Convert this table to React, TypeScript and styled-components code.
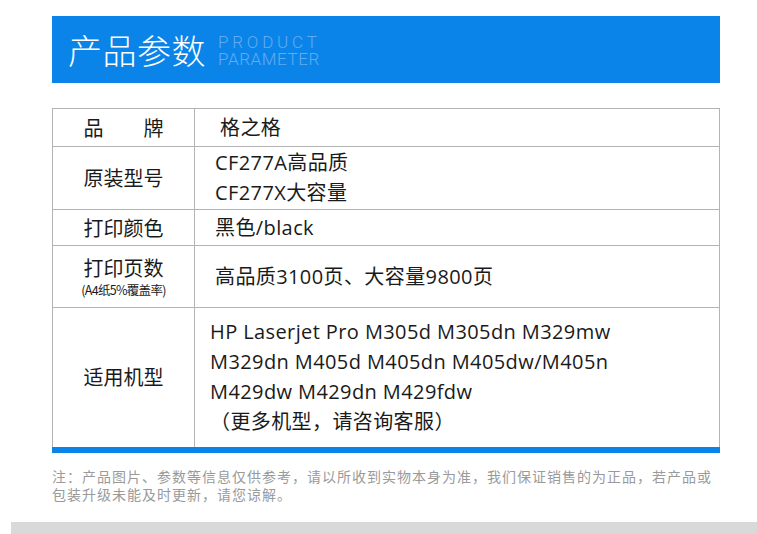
import { createGlobalStyle } from "styled-components";
import styled from "styled-components";
import { JSX } from "react";

const GlobalStyle = createGlobalStyle`
  html, body {
    margin: 0;
    padding: 0;
    background: #ffffff;
  }
  body {
    font-family: "Open Sans", "Noto Sans CJK SC", sans-serif;
    color: #1a1a1a;
  }
`;

const Page = styled.div`
  width: 757px;
  height: 534px;
  overflow: hidden;
  display: flex;
  flex-direction: column;
`;

const Content = styled.div`
  padding: 16px 37px 0 52px;
  display: flex;
  flex-direction: column;
`;

const Banner = styled.header`
  height: 67px;
  background-color: #0a84e8;
  display: flex;
  align-items: center;
  gap: 12px;
  padding-left: 16px;
`;

const BannerTitle = styled.h1`
  margin: 0;
  font-family: "Noto Sans CJK SC", sans-serif;
  font-weight: 300;
  font-size: 34px;
  line-height: 1;
  color: #ffffff;
  letter-spacing: 0.5px;
`;

const BannerSub = styled.div`
  display: flex;
  flex-direction: column;
  padding-top: 2px;
`;

const SubLine = styled.span<{ $spacing: number }>`
  font-family: "Roboto", "Liberation Sans", sans-serif;
  font-weight: 300;
  font-size: 17px;
  line-height: 17px;
  color: #62acf0;
  letter-spacing: ${({ $spacing }) => $spacing}px;
  white-space: nowrap;
`;

const Table = styled.table`
  margin-top: 25px;
  width: 668px;
  border-collapse: collapse;
  border-bottom: 6px solid #0a84e8;
`;

const Row = styled.tr<{ $height: number }>`
  height: ${({ $height }) => $height}px;
`;

const Label = styled.td`
  width: 141px;
  border: 1px solid #b3b3b3;
  text-align: center;
  vertical-align: middle;
  font-family: "Noto Sans CJK SC", sans-serif;
  font-size: 20px;
  line-height: 24px;
  color: #1a1a1a;
  padding: 0;
`;

const LabelNote = styled.div`
  font-family: "Noto Sans CJK SC", sans-serif;
  font-size: 12.5px;
  line-height: 14px;
  letter-spacing: -0.7px;
  margin-top: 3px;
`;

const Value = styled.td<{ $indent: number }>`
  border: 1px solid #b3b3b3;
  vertical-align: middle;
  padding: 0 0 0 ${({ $indent }) => $indent}px;
  font-family: "Open Sans", "Noto Sans CJK SC", sans-serif;
  font-size: 20px;
  letter-spacing: 0.4px;
  line-height: 30px;
  color: #1a1a1a;
`;

const Line = styled.div`
  white-space: nowrap;
`;

const Note = styled.p`
  margin: 14px 0 0;
  width: 670px;
  font-family: "Noto Sans CJK SC", sans-serif;
  font-size: 14px;
  letter-spacing: 1px;
  line-height: 18px;
  color: #9a9a9a;
`;

const BottomBar = styled.div`
  margin: auto 0 0 11px;
  height: 12px;
  background-color: #d9d9d9;
`;

const App = (): JSX.Element => {
  return (
    <Page>
      <GlobalStyle />
      <Content>
        <Banner>
          <BannerTitle>产品参数</BannerTitle>
          <BannerSub>
            <SubLine $spacing={3.8}>PRODUCT</SubLine>
            <SubLine $spacing={0.6}>PARAMETER</SubLine>
          </BannerSub>
        </Banner>
        <Table>
          <tbody>
            <Row $height={38}>
              <Label>品　　牌</Label>
              <Value $indent={25}>格之格</Value>
            </Row>
            <Row $height={63}>
              <Label>原装型号</Label>
              <Value $indent={20}>
                <Line>CF277A高品质</Line>
                <Line>CF277X大容量</Line>
              </Value>
            </Row>
            <Row $height={36}>
              <Label>打印颜色</Label>
              <Value $indent={20}>黑色/black</Value>
            </Row>
            <Row $height={62}>
              <Label>
                打印页数
                <LabelNote>(A4纸5%覆盖率)</LabelNote>
              </Label>
              <Value $indent={20}>高品质3100页、大容量9800页</Value>
            </Row>
            <Row $height={142}>
              <Label>适用机型</Label>
              <Value $indent={15}>
                <Line>HP Laserjet Pro M305d M305dn M329mw</Line>
                <Line>M329dn M405d M405dn M405dw/M405n</Line>
                <Line>M429dw M429dn M429fdw</Line>
                <Line>（更多机型，请咨询客服）</Line>
              </Value>
            </Row>
          </tbody>
        </Table>
        <Note>
          注：产品图片、参数等信息仅供参考，请以所收到实物本身为准，我们保证销售的为正品，若产品或包装升级未能及时更新，请您谅解。
        </Note>
      </Content>
      <BottomBar />
    </Page>
  );
};

export default App;
